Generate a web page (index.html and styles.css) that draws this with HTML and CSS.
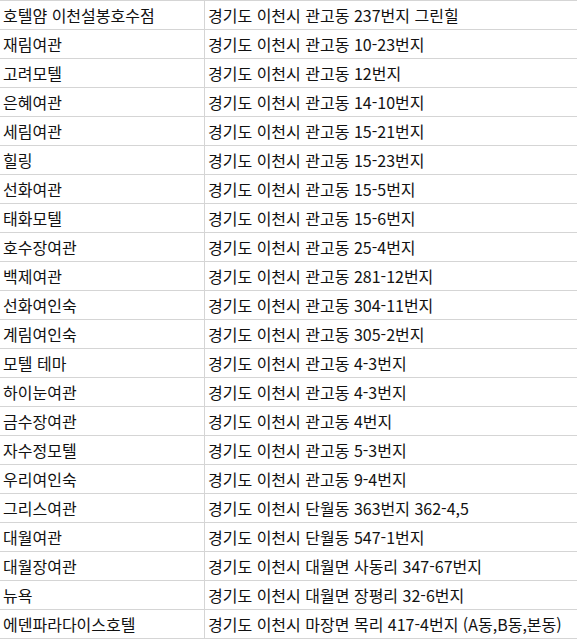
FILE: index.html
```html
<!DOCTYPE html>
<html lang="ko">
<head>
<meta charset="utf-8">
<link rel="stylesheet" href="styles.css">
</head>
<body>
<div class="list">
  <div class="row"><div class="name">호텔얌 이천설봉호수점</div><div class="addr">경기도 이천시 관고동 237번지 그린힐</div></div>
  <div class="row"><div class="name">재림여관</div><div class="addr">경기도 이천시 관고동 10-23번지</div></div>
  <div class="row"><div class="name">고려모텔</div><div class="addr">경기도 이천시 관고동 12번지</div></div>
  <div class="row"><div class="name">은혜여관</div><div class="addr">경기도 이천시 관고동 14-10번지</div></div>
  <div class="row"><div class="name">세림여관</div><div class="addr">경기도 이천시 관고동 15-21번지</div></div>
  <div class="row"><div class="name">힐링</div><div class="addr">경기도 이천시 관고동 15-23번지</div></div>
  <div class="row"><div class="name">선화여관</div><div class="addr">경기도 이천시 관고동 15-5번지</div></div>
  <div class="row"><div class="name">태화모텔</div><div class="addr">경기도 이천시 관고동 15-6번지</div></div>
  <div class="row"><div class="name">호수장여관</div><div class="addr">경기도 이천시 관고동 25-4번지</div></div>
  <div class="row"><div class="name">백제여관</div><div class="addr">경기도 이천시 관고동 281-12번지</div></div>
  <div class="row"><div class="name">선화여인숙</div><div class="addr">경기도 이천시 관고동 304-11번지</div></div>
  <div class="row"><div class="name">계림여인숙</div><div class="addr">경기도 이천시 관고동 305-2번지</div></div>
  <div class="row"><div class="name">모텔 테마</div><div class="addr">경기도 이천시 관고동 4-3번지</div></div>
  <div class="row"><div class="name">하이눈여관</div><div class="addr">경기도 이천시 관고동 4-3번지</div></div>
  <div class="row"><div class="name">금수장여관</div><div class="addr">경기도 이천시 관고동 4번지</div></div>
  <div class="row"><div class="name">자수정모텔</div><div class="addr">경기도 이천시 관고동 5-3번지</div></div>
  <div class="row"><div class="name">우리여인숙</div><div class="addr">경기도 이천시 관고동 9-4번지</div></div>
  <div class="row"><div class="name">그리스여관</div><div class="addr">경기도 이천시 단월동 363번지 362-4,5</div></div>
  <div class="row"><div class="name">대월여관</div><div class="addr">경기도 이천시 단월동 547-1번지</div></div>
  <div class="row"><div class="name">대월장여관</div><div class="addr">경기도 이천시 대월면 사동리 347-67번지</div></div>
  <div class="row"><div class="name">뉴욕</div><div class="addr">경기도 이천시 대월면 장평리 32-6번지</div></div>
  <div class="row"><div class="name">에덴파라다이스호텔</div><div class="addr">경기도 이천시 마장면 목리 417-4번지 (A동,B동,본동)</div></div>
</div>
</body>
</html>
```
FILE: styles.css
```css
html, body {
  margin: 0;
  padding: 0;
  background: #ffffff;
}
body {
  font-family: "Noto Sans CJK KR", "Noto Sans", sans-serif;
  font-size: 16px;
  color: #111111;
}
.list {
  width: 577px;
  border-top: 1px solid #d5d5d5;
}
.row {
  display: grid;
  grid-template-columns: 205px 1fr;
  height: 29px;
  box-sizing: border-box;
  border-bottom: 1px solid #d5d5d5;
}
.name, .addr {
  display: flex;
  align-items: center;
  padding-left: 3px;
  white-space: nowrap;
  line-height: 1;
}
.name {
  border-right: 1px solid #d5d5d5;
}
```
